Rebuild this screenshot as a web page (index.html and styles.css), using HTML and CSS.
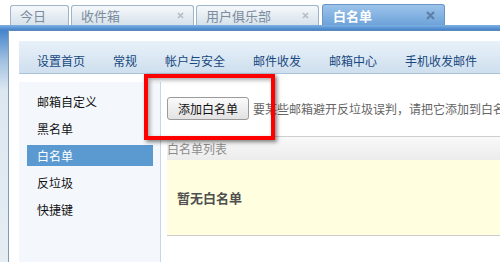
FILE: index.html
```html
<!DOCTYPE html>
<html lang="zh-CN">
<head>
    <meta charset="UTF-8">
    <title>白名单</title>
    <link rel="stylesheet" href="styles.css">
</head>
<body>
    <div class="tabs">
        <div class="tab tab-first">今日</div>
        <div class="tab">收件箱<span class="close"><svg width="7" height="7" viewBox="0 0 7 7"><path d="M1 1L6 6M6 1L1 6" stroke="currentColor" stroke-width="1.6"/></svg></span></div>
        <div class="tab">用户俱乐部<span class="close"><svg width="7" height="7" viewBox="0 0 7 7"><path d="M1 1L6 6M6 1L1 6" stroke="currentColor" stroke-width="1.6"/></svg></span></div>
        <div class="tab tab-active">白名单<span class="close"><svg width="9" height="9" viewBox="0 0 9 9"><path d="M1 1L8 8M8 1L1 8" stroke="currentColor" stroke-width="2.2"/></svg></span></div>
    </div>
    <div class="band"></div>
    <div class="frame">
        <div class="frame-edge"></div>
        <div class="frame-body">
            <div class="nav">
                <span>设置首页</span>
                <span>常规</span>
                <span>帐户与安全</span>
                <span>邮件收发</span>
                <span>邮箱中心</span>
                <span>手机收发邮件</span>
            </div>
            <div class="main">
                <ul class="side">
                    <li>邮箱自定义</li>
                    <li>黑名单</li>
                    <li class="selected">白名单</li>
                    <li>反垃圾</li>
                    <li>快捷键</li>
                </ul>
                <div class="content">
                    <div class="toolbar">
                        <button class="btn">添加白名单</button>
                        <span class="hint">要某些邮箱避开反垃圾误判，请把它添加到白名单</span>
                    </div>
                    <div class="list-head">白名单列表</div>
                    <div class="empty">暂无白名单</div>
                </div>
            </div>
        </div>
    </div>
    <div class="highlight"></div>
</body>
</html>
```

FILE: styles.css
```css
body {
    margin: 0;
    font-family: "Noto Sans CJK SC", "Liberation Sans", sans-serif;
    font-size: 12px;
    background: #fff;
    overflow: hidden;
    width: 500px;
    height: 262px;
    position: relative;
}
.tabs {
    display: flex;
    align-items: flex-end;
    height: 25px;
    padding-left: 10px;
    gap: 2px;
    box-sizing: border-box;
}
.tab {
    flex-shrink: 0;
    box-sizing: border-box;
    width: 123px;
    height: 20px;
    padding: 0 9px;
    display: flex;
    align-items: center;
    justify-content: space-between;
    color: #7d8c9c;
    font-size: 13px;
    background: linear-gradient(#f6f9fb, #d5e1eb);
    border: 1px solid #9fb4c7;
    border-bottom: none;
    border-radius: 3px 3px 0 0;
}
.tab-first {
    width: 59px;
}
.tab .close {
    color: #b4bcc4;
    display: flex;
}
.tab-active {
    height: 21px;
    margin-left: 1px;
    padding-left: 10px;
    color: #fff;
    font-weight: bold;
    background: linear-gradient(#9cc3ea, #6ea3da);
    border-color: #6a96c6;
}
.tab-active .close {
    color: #5f7fa6;
}
.band {
    height: 5px;
    background: linear-gradient(#7fb1e2, #4583cb);
}
.frame {
    display: flex;
    height: 232px;
}
.frame-edge {
    flex-shrink: 0;
    width: 8px;
    background: linear-gradient(#4583cb, #9fc0e0 30px, #dde7f0 60px, #e6edf3);
    border-right: 1px solid #7d9cbc;
}
.frame-body {
    flex: 1;
    min-width: 0;
    padding: 10px 0 0 10px;
    border-top: 1px solid #5d88b8;
}
.nav {
    box-sizing: border-box;
    height: 33px;
    padding: 12px 0 0 18px;
    line-height: 16px;
    display: flex;
    gap: 28px;
    white-space: nowrap;
    color: #18487e;
    background: linear-gradient(#e8f1f9, #cfdfee);
    border-bottom: 1px solid #a9c3da;
}
.main {
    display: flex;
    margin-top: 8px;
    height: 180px;
}
.side {
    flex-shrink: 0;
    list-style: none;
    margin: 0;
    padding: 9px 0 0 8px;
    width: 141px;
    box-sizing: border-box;
    background: #f4f8fc;
}
.side li {
    width: 126px;
    height: 21px;
    line-height: 21px;
    padding-left: 10px;
    box-sizing: border-box;
    margin-bottom: 6px;
    color: #111;
}
.side li.selected {
    background: #5b99d1;
    color: #fff;
}
.content {
    flex: 1;
    min-width: 0;
    overflow: hidden;
    border-left: 1px solid #c7d6e4;
    padding: 15px 0 0 6px;
}
.toolbar {
    display: flex;
    align-items: center;
    height: 23px;
    margin-bottom: 16px;
}
.btn {
    flex-shrink: 0;
    font-family: inherit;
    font-size: 12px;
    width: 82px;
    height: 23px;
    padding: 0;
    color: #111;
    background: linear-gradient(#fbfbfb, #e2e2e2);
    border: 1px solid #9a9a9a;
    border-radius: 3px;
}
.hint {
    margin-left: 4px;
    color: #666;
    white-space: nowrap;
}
.list-head {
    height: 23px;
    line-height: 23px;
    color: #8c8c8c;
    border-top: 1px solid #cfcfcf;
    background: linear-gradient(#f9f9f9, #ececec);
}
.empty {
    height: 75px;
    line-height: 75px;
    padding-left: 10px;
    font-size: 13px;
    font-weight: bold;
    color: #505050;
    background: #ffffdf;
    border-bottom: 1px solid #cccccc;
}
.highlight {
    position: absolute;
    left: 144px;
    top: 74px;
    width: 123px;
    height: 58px;
    border: 4px solid #f00;
    box-shadow: 2px 2px 4px rgba(0, 0, 0, 0.5), inset 2px 2px 4px rgba(0, 0, 0, 0.35);
}
```
